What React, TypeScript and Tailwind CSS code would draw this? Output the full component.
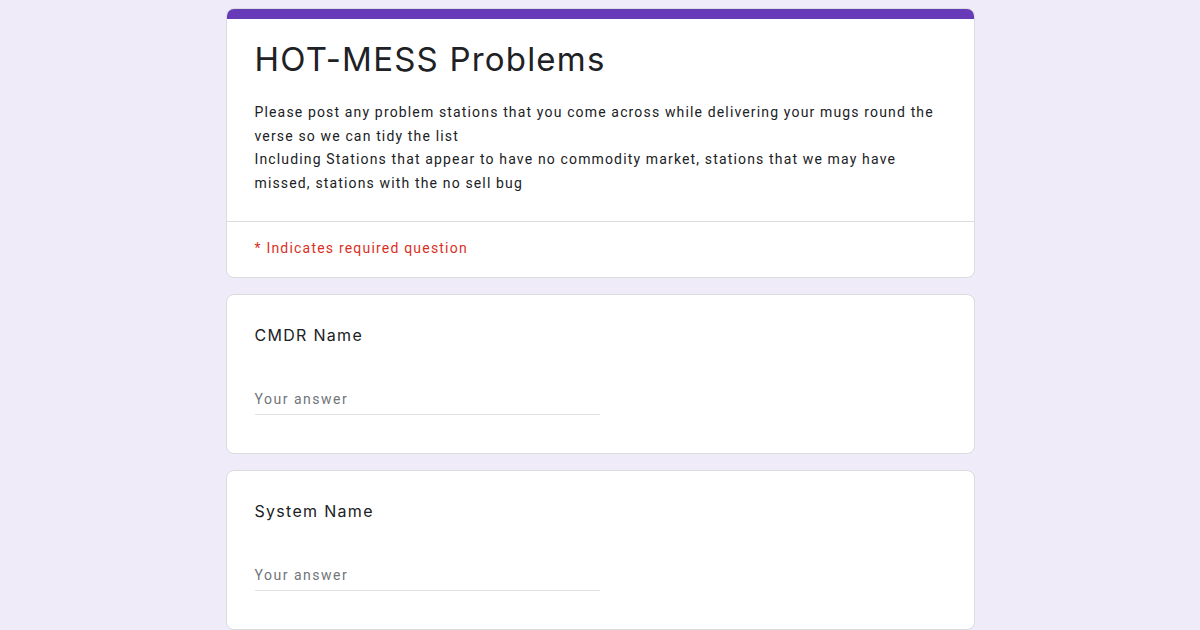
export default function App() {
  return (
    <div className="min-h-screen w-full bg-[#f0ebf8] pt-[8px]" style={{ fontFamily: 'Roboto, "Liberation Sans", sans-serif' }}>
      <div className="mx-auto w-[749px]">
        {/* header card */}
        <div className="overflow-hidden rounded-[8px] border border-[#dadce0] bg-white">
          <div className="h-[10px] bg-[#673ab7]" />
          <div className="px-[28px] pt-[20px] pb-[26px]">
            <h1 className="text-[33px] leading-[40px] tracking-[1.2px] text-[#202124]" style={{ fontFamily: 'Inter, "Open Sans", sans-serif' }}>
              HOT-MESS Problems
            </h1>
            <div className="mt-[22px] text-[14px] leading-[23.5px] tracking-[1.15px] text-[#202124]">
              <p>Please post any problem stations that you come across while delivering your mugs round the verse so we can tidy the list</p>
              <p>Including Stations that appear to have no commodity market, stations that we may have missed, stations with the no sell bug</p>
            </div>
          </div>
          <div className="border-t border-[#dadce0] px-[28px] pt-[16px] pb-[19px] text-[14px] leading-[20px] tracking-[1.2px] text-[#d93025]">
            * Indicates required question
          </div>
        </div>

        <QuestionCard title="CMDR Name" />
        <QuestionCard title="System Name" />
      </div>
    </div>
  );
}

function QuestionCard({ title }: { title: string }) {
  return (
    <div className="mt-[16px] rounded-[8px] border border-[#dadce0] bg-white px-[28px] pt-[28px] pb-[38px]">
      <div className="text-[16px] leading-[24px] tracking-[1.3px] text-[#202124]" style={{ fontFamily: 'Inter, "Open Sans", sans-serif' }}>
        {title}
      </div>
      <div className="mt-[42px] w-[345px] border-b border-[#e0e0e0] pb-[5px] text-[14px] leading-[20px] tracking-[1.5px] text-[#70757a]">
        Your answer
      </div>
    </div>
  );
}
